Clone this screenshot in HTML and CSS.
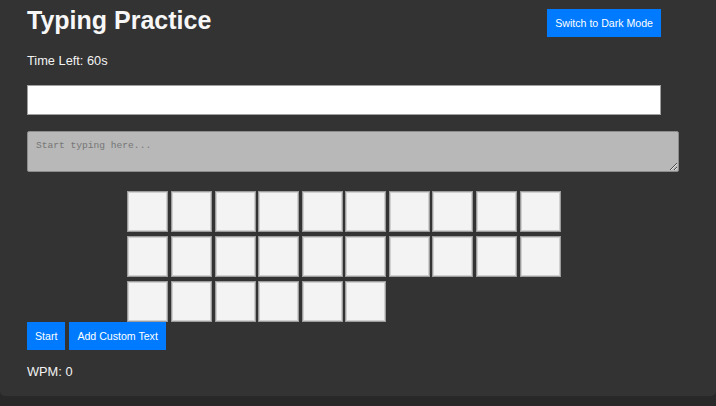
FILE: index.html
```html
<!DOCTYPE html>
<html lang="en">
<head>
<meta charset="utf-8">
<title>Typing Practice</title>
<link rel="stylesheet" href="styles.css">
</head>
<body>
<div class="container">
  <div class="header">
    <h1 class="title">Typing Practice</h1>
    <button class="btn btn-mode">Switch to Dark Mode</button>
  </div>
  <div class="timer">Time Left: 60s</div>
  <input class="text-display" type="text">
  <textarea class="typing-area" placeholder="Start typing here..."></textarea>
  <div class="keyboard">
    <div class="key"></div><div class="key"></div><div class="key"></div><div class="key"></div><div class="key"></div>
    <div class="key"></div><div class="key"></div><div class="key"></div><div class="key"></div><div class="key"></div>
    <div class="key"></div><div class="key"></div><div class="key"></div><div class="key"></div><div class="key"></div>
    <div class="key"></div><div class="key"></div><div class="key"></div><div class="key"></div><div class="key"></div>
    <div class="key"></div><div class="key"></div><div class="key"></div><div class="key"></div><div class="key"></div>
    <div class="key"></div>
  </div>
  <div class="actions">
    <button class="btn">Start</button>
    <button class="btn">Add Custom Text</button>
  </div>
  <div class="wpm">WPM: 0</div>
</div>
</body>
</html>
```

FILE: styles.css
```css
html, body {
  margin: 0;
  padding: 0;
  background: #282828;
  font-family: "Liberation Sans", Arial, sans-serif;
  color: #f2f2f2;
}

.container {
  background: #333333;
  padding: 6px 55px 17px 27px;
  border-radius: 0 0 5px 5px;
}

.header {
  display: flex;
  justify-content: space-between;
  align-items: flex-start;
}

.title {
  margin: 0;
  font-size: 25px;
  line-height: 29px;
  font-weight: bold;
  color: #f7f7f7;
}

.btn {
  background: #007bff;
  color: #ffffff;
  border: none;
  border-radius: 0;
  height: 28px;
  padding: 0 8px;
  font-family: "Liberation Sans", Arial, sans-serif;
  font-size: 10.6px;
  cursor: pointer;
}

.btn-mode {
  margin-top: 3px;
}

.timer {
  margin-top: 16px;
  font-size: 12.8px;
  line-height: 15px;
}

.text-display {
  display: block;
  width: 100%;
  margin: 17px 0 0 0;
  height: 30px;
  box-sizing: border-box;
  border: 1px solid #a0a0a0;
  background: #ffffff;
  padding: 0 6px;
}

.typing-area {
  display: block;
  width: 100%;
  margin: 16px 0 0 0;
  height: 23px;
  box-sizing: content-box;
  background: #b8b8b8;
  border: 1px solid #8c8c8c;
  border-radius: 2px;
  padding: 8px 8px;
  font-family: "Liberation Mono", "Courier New", monospace;
  font-size: 9.6px;
  color: #333;
  resize: vertical;
}

.typing-area::placeholder {
  color: #767676;
}

.keyboard {
  margin-top: 19px;
  display: grid;
  grid-template-columns: repeat(10, 41px);
  grid-auto-rows: 41px;
  column-gap: 2.6px;
  row-gap: 4px;
  justify-content: center;
}

.key {
  background: #f3f3f3;
  border: 1px solid #9c9c9c;
  box-shadow: inset 0 0 0 1px #d0d0d0;
  box-sizing: border-box;
}

.actions {
  display: flex;
  gap: 4px;
}

.wpm {
  margin-top: 14px;
  font-size: 12.8px;
  line-height: 15px;
}
```
